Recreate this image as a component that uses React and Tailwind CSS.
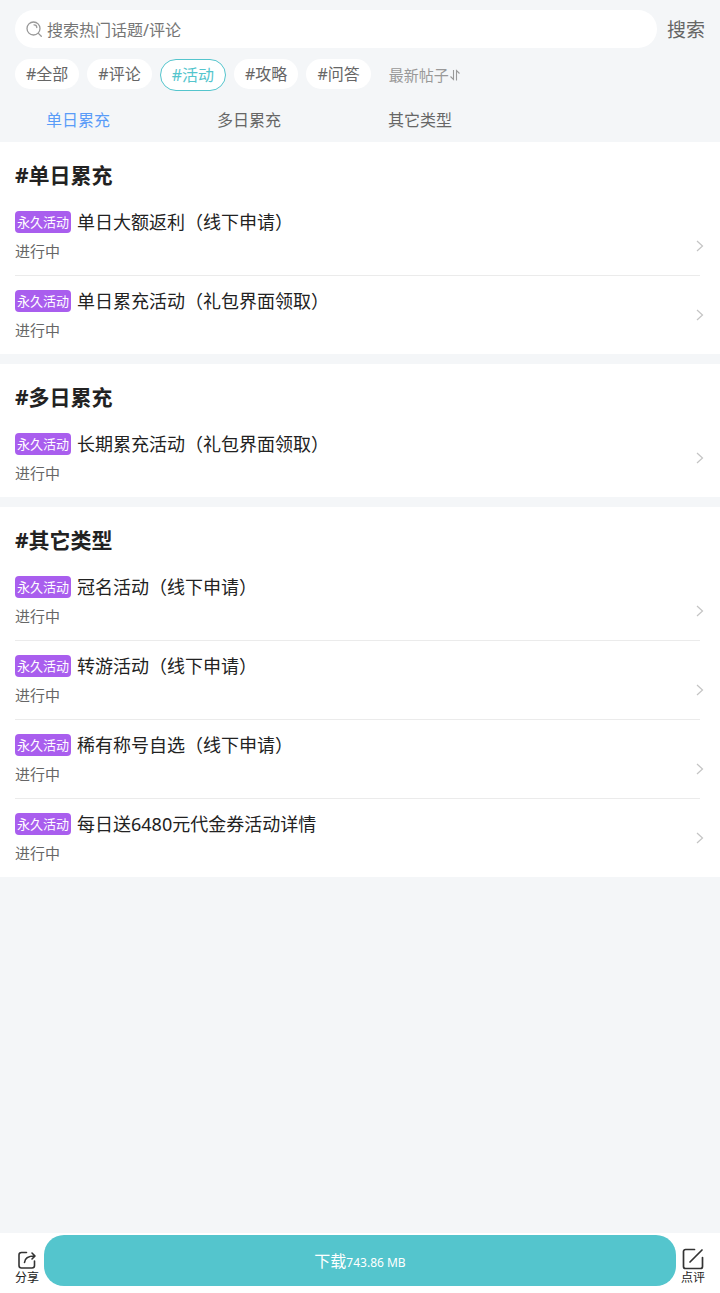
import React, { useState } from 'react';

const filters = ['#全部', '#评论', '#活动', '#攻略', '#问答'];
const tabs = ['单日累充', '多日累充', '其它类型'];

const sections = [
    {
        title: '#单日累充',
        items: ['单日大额返利（线下申请）', '单日累充活动（礼包界面领取）'],
    },
    {
        title: '#多日累充',
        items: ['长期累充活动（礼包界面领取）'],
    },
    {
        title: '#其它类型',
        items: ['冠名活动（线下申请）', '转游活动（线下申请）', '稀有称号自选（线下申请）', '每日送6480元代金券活动详情'],
    },
];

function SearchIcon() {
    return (
        <svg width="17" height="17" viewBox="0 0 17 17" fill="none" stroke="#999" strokeWidth="1.3" strokeLinecap="round" className="shrink-0">
            <circle cx="7.5" cy="7.5" r="6.5" />
            <path d="M12.4 12.4 15.3 15.3M8 3.8c1.7 0 2.8 1.1 2.8 2.8" />
        </svg>
    );
}

function SortIcon() {
    return (
        <svg width="12" height="12" viewBox="0 0 12 12" fill="none" stroke="#999" strokeWidth="1.1">
            <path d="M4.5 1v9.5L1.5 7.5M7.5 11.5V1.5L10.5 4.5" />
        </svg>
    );
}

function Chevron() {
    return (
        <svg width="10" height="12" viewBox="0 0 10 12" fill="none" stroke="#c4c4c4" strokeWidth="1.2" className="shrink-0">
            <path d="M2 1 7.5 6 2 11" />
        </svg>
    );
}

function ShareIcon() {
    return (
        <svg width="20" height="20" viewBox="0 0 20 20" fill="none" stroke="#333" strokeWidth="1.6" strokeLinecap="round" strokeLinejoin="round">
            <path d="M9.5 2.5H4.500a2.500 2.500 0 0 0-2.500 2.500v10.500a2.500 2.500 0 0 0 2.500 2.500h10.500a2.500 2.500 0 0 0 2.500-2.500V11" />
            <path d="M7.500 12.500C7.800 8.500 10.500 6 17.500 6M15 3l3 3-3 3" />
        </svg>
    );
}

function ReviewIcon() {
    return (
        <svg width="22" height="22" viewBox="0 0 22 22" fill="none" stroke="#333" strokeWidth="1.7" strokeLinecap="round" strokeLinejoin="round">
            <path d="M12.5 1.5H3.500a2 2 0 0 0-2 2v15a2 2 0 0 0 2 2h15a2 2 0 0 0 2-2V9.500M8 14 20 2" />
        </svg>
    );
}

function ActivityRow({ title, last }) {
    return (
        <li>
            <a href="#detail" className="flex items-center justify-between py-[13px]">
                <div>
                    <div className="flex items-center gap-1.5 leading-6">
                        <span className="rounded bg-[#a95eee] px-0.5 text-[13px] leading-[22px] text-white">永久活动</span>
                        <span className="text-lg leading-6 text-[#222]">{title}</span>
                    </div>
                    <p className="mt-1.5 text-[15px] leading-[22px] text-[#666]">进行中</p>
                </div>
                <div className={last ? 'flex' : 'flex pt-5'}>
                    <Chevron />
                </div>
            </a>
            {!last && <div className="mr-[5px] h-px bg-[#ebebeb]" />}
        </li>
    );
}

export default function App() {
    const [filter, setFilter] = useState('#活动');
    const [tab, setTab] = useState('单日累充');

    return (
        <div className="flex min-h-screen flex-col bg-[#f4f6f8] font-['Noto_Sans','Noto_Sans_CJK_SC',sans-serif] text-[#666]">
            <header className="px-[15px] pt-2.5">
                <form className="flex items-center gap-2.5" onSubmit={(e) => e.preventDefault()}>
                    <label className="flex h-[38px] flex-1 items-center gap-1 rounded-full bg-white px-[11px]">
                        <SearchIcon />
                        <input
                            type="text"
                            aria-label="搜索"
                            placeholder="搜索热门话题/评论"
                            className="min-w-0 flex-1 bg-transparent pt-0.5 text-base outline-none placeholder:text-[#757575]"
                        />
                    </label>
                    <button type="submit" className="pt-0.5 text-[19px] leading-6">搜索</button>
                </form>

                <div className="mt-[11px] flex h-8 items-start gap-2">
                    {filters.map((name) => (
                        <button
                            key={name}
                            type="button"
                            onClick={() => setFilter(name)}
                            className={
                                name === filter
                                    ? 'rounded-full border border-[#54c5cd] bg-white px-[11px] text-base leading-[30px] text-[#54c5cd]'
                                    : 'rounded-full bg-white px-[11px] text-base leading-[30px]'
                            }
                        >
                            {name}
                        </button>
                    ))}
                    <button type="button" className="ml-2.5 flex items-center text-[15px] leading-8 text-[#999]">
                        最新帖子
                        <SortIcon />
                    </button>
                </div>

                <nav className="flex gap-[107px] px-[31px] pt-[17px] pb-2.5">
                    {tabs.map((name) => (
                        <button
                            key={name}
                            type="button"
                            onClick={() => setTab(name)}
                            className={name === tab ? 'text-base leading-6 text-[#5a9cf8]' : 'text-base leading-6'}
                        >
                            {name}
                        </button>
                    ))}
                </nav>
            </header>

            <main className="flex flex-col gap-2.5">
                {sections.map((section) => (
                    <section key={section.title} className="bg-white px-[15px]">
                        <h2 className="pt-[19px] pb-2 text-[21px] leading-7 font-bold text-[#222]">{section.title}</h2>
                        <ul>
                            {section.items.map((item, i) => (
                                <ActivityRow key={item} title={item} last={i === section.items.length - 1} />
                            ))}
                        </ul>
                    </section>
                ))}
            </main>

            {/* Bottom download bar */}
            <footer className="sticky bottom-0 mt-auto flex h-[60px] bg-white px-[15px] pt-0.5">
                <button type="button" className="flex flex-col items-center pt-[15px] text-xs leading-4 text-[#222]">
                    <ShareIcon />
                    分享
                </button>
                <button type="button" className="mx-[5px] h-[51px] flex-1 rounded-[20px] bg-[#54c5cd] text-base text-white">
                    下载<span className="text-xs">743.86 MB</span>
                </button>
                <button type="button" className="flex flex-col items-center pt-[13px] text-xs leading-4 text-[#222]">
                    <ReviewIcon />
                    点评
                </button>
            </footer>
        </div>
    );
}
